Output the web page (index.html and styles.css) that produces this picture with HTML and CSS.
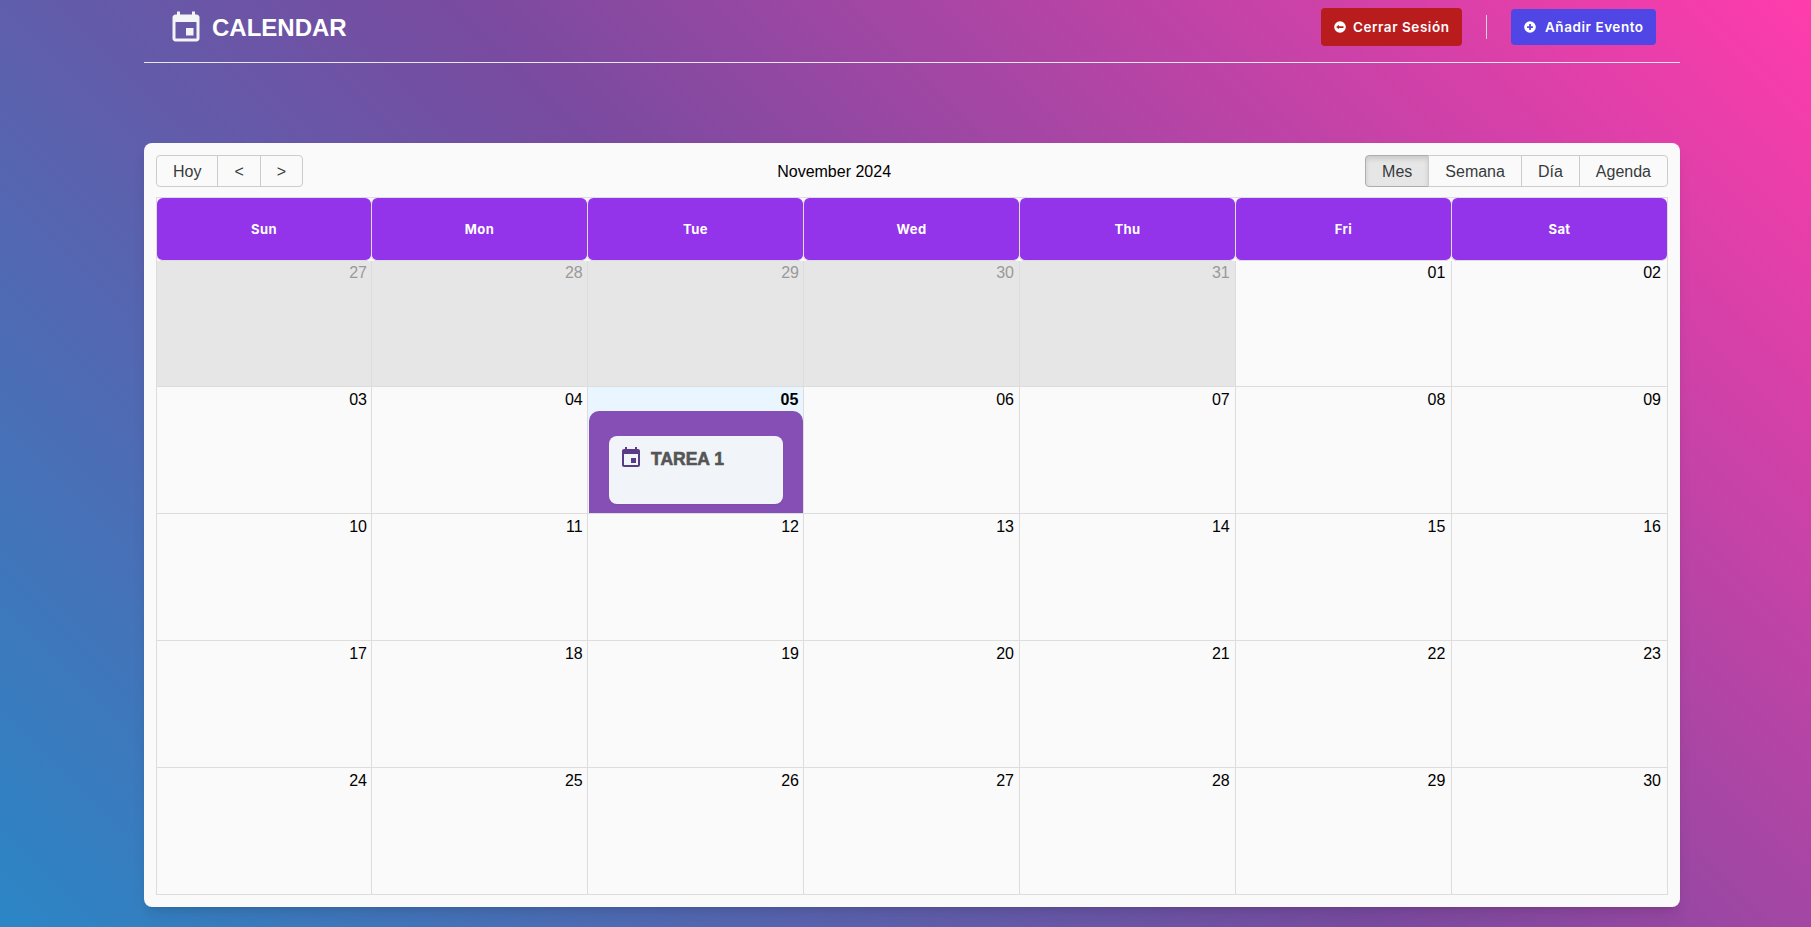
FILE: index.html
```html
<!DOCTYPE html>
<html lang="es">
<head>
<meta charset="utf-8">
<title>Calendar</title>
<link rel="stylesheet" href="styles.css">
</head>
<body>
<div class="page">
  <header class="topbar">
    <div class="brand">
      <svg class="brand-icon" viewBox="0 0 24 24"><path d="M17 12h-5v5h5v-5zM16 1v2H8V1H6v2H5c-1.11 0-1.99.9-1.99 2L3 19c0 1.1.89 2 2 2h14c1.1 0 2-.9 2-2V5c0-1.1-.9-2-2-2h-1V1h-2zm3 18H5V8h14v11z"/></svg>
      <h1 class="brand-title">CALENDAR</h1>
    </div>
    <div class="actions">
      <button class="action action-logout"><svg class="action-icon" viewBox="0 0 24 24"><path fill-rule="evenodd" d="M12 2a10 10 0 1 0 0 20 10 10 0 0 0 0-20zM5.500 12 10 8v2.500h8v3h-8V16z"/></svg>Cerrar Sesión</button>
      <span class="divider"></span>
      <button class="action action-add"><svg class="action-icon" viewBox="0 0 24 24"><path d="M12 2a10 10 0 1 0 0 20 10 10 0 0 0 0-20zm1.500 11.500V17h-3v-3.500H7v-3h3.500V7h3v3.500H17v3h-3.500z"/></svg>Añadir Evento</button>
    </div>
  </header>

  <main class="card">
    <div class="toolbar">
      <div class="btn-group">
        <button class="tb-btn">Hoy</button><button class="tb-btn">&lt;</button><button class="tb-btn">&gt;</button>
      </div>
      <span class="toolbar-label">November 2024</span>
      <div class="btn-group">
        <button class="tb-btn tb-active">Mes</button><button class="tb-btn">Semana</button><button class="tb-btn">Día</button><button class="tb-btn">Agenda</button>
      </div>
    </div>

    <div class="month">
      <div class="week head-row">
        <div class="head">Sun</div><div class="head">Mon</div><div class="head">Tue</div><div class="head">Wed</div><div class="head">Thu</div><div class="head">Fri</div><div class="head">Sat</div>
      </div>
      <div class="week">
        <div class="day off">27</div><div class="day off">28</div><div class="day off">29</div><div class="day off">30</div><div class="day off">31</div><div class="day">01</div><div class="day">02</div>
      </div>
      <div class="week">
        <div class="day">03</div><div class="day">04</div>
        <div class="day today">
          <span class="today-num">05</span>
          <div class="event">
            <div class="event-inner">
              <svg class="event-icon" viewBox="0 0 24 24"><path d="M17 12h-5v5h5v-5zM16 1v2H8V1H6v2H5c-1.11 0-1.99.9-1.99 2L3 19c0 1.1.89 2 2 2h14c1.1 0 2-.9 2-2V5c0-1.1-.9-2-2-2h-1V1h-2zm3 18H5V8h14v11z"/></svg>
              <span class="event-title">TAREA 1</span>
            </div>
          </div>
        </div>
        <div class="day">06</div><div class="day">07</div><div class="day">08</div><div class="day">09</div>
      </div>
      <div class="week">
        <div class="day">10</div><div class="day">11</div><div class="day">12</div><div class="day">13</div><div class="day">14</div><div class="day">15</div><div class="day">16</div>
      </div>
      <div class="week">
        <div class="day">17</div><div class="day">18</div><div class="day">19</div><div class="day">20</div><div class="day">21</div><div class="day">22</div><div class="day">23</div>
      </div>
      <div class="week">
        <div class="day">24</div><div class="day">25</div><div class="day">26</div><div class="day">27</div><div class="day">28</div><div class="day">29</div><div class="day">30</div>
      </div>
    </div>
  </main>
</div>
</body>
</html>
```
FILE: styles.css
```css
* { box-sizing: border-box; }
html, body { margin: 0; height: 100%; }
body {
  background: linear-gradient(225deg, #ff3cac 0%, #784ba0 50%, #2b86c5 100%);
  font-family: "Liberation Sans", Arial, sans-serif;
  overflow: hidden;
}
.page { width: 1536px; margin-left: 144px; }
.topbar {
  display: flex;
  justify-content: space-between;
  align-items: center;
  height: 63px;
  padding: 0 24px 6px;
  border-bottom: 1px solid #e5e7eb;
}
.brand { display: flex; align-items: center; gap: 8px; }
.brand-icon { width: 36px; height: 36px; fill: #f3f4f6; }
.brand-title { margin: 0; font-size: 24px; font-weight: 700; color: #fff; }
.actions { display: flex; align-items: center; gap: 24px; margin-bottom: 2px; }
.action {
  display: flex;
  align-items: center;
  border: 0;
  border-radius: 4px;
  color: #fff;
  font-family: Inter, sans-serif;
  font-size: 13.5px;
  font-weight: 600;
  letter-spacing: .55px;
  white-space: nowrap;
}
.action-icon { width: 14px; height: 14px; fill: #fff; flex: none; }
.action-logout { height: 38px; width: 141px; padding: 0 12px; gap: 6px; background: #b91c1c; }
.action-add { height: 36px; width: 145px; padding: 0 12px; gap: 8px; background: #4f46e5; }
.divider { width: 1px; height: 24px; background: #d1d5db; }

.card {
  margin-top: 80px;
  height: 764px;
  padding: 12px;
  background: #fafafa;
  border-radius: 8px;
  box-shadow: 0 10px 15px -3px rgba(0,0,0,.1), 0 4px 6px -4px rgba(0,0,0,.1);
  display: flex;
  flex-direction: column;
}
.toolbar {
  display: flex;
  align-items: center;
  justify-content: space-between;
  margin-bottom: 10px;
  font-size: 16px;
}
.toolbar-label { color: #000; padding-top: 1px; }
.btn-group { display: flex; }
.tb-btn {
  height: 32px;
  margin-left: -1px;
  padding: 2px 16px 0;
  background: none;
  border: 1px solid #ccc;
  color: #373a3c;
  font: 16px "Liberation Sans", Arial, sans-serif;
}
.tb-btn:first-child { margin-left: 0; border-radius: 4px 0 0 4px; }
.tb-btn:last-child { border-radius: 0 4px 4px 0; }
.tb-active {
  background: #e6e6e6;
  border-color: #adadad;
  box-shadow: inset 0 3px 5px rgba(0,0,0,.125);
}
.month {
  flex: 1;
  display: grid;
  grid-template-rows: 63px 126px repeat(3, 127px) 1fr;
  border: 1px solid #ddd;
}
.week {
  display: grid;
  grid-template-columns: 1fr repeat(6, 216px);
  border-bottom: 1px solid #ddd;
}
.week:last-child { border-bottom: 0; }
.head-row { border-bottom: 0; }
.head {
  display: flex;
  align-items: center;
  justify-content: center;
  background: #9333ea;
  border-left: 1px solid #ddd;
  border-bottom: 1px solid #ddd;
  border-radius: 6px;
  color: #fff;
  font-family: Inter, sans-serif;
  font-size: 13px;
  font-weight: 700;
  letter-spacing: .4px;
}
.head:first-child { border-left: 0; }
.day {
  min-width: 0;
  padding: 3px 4px 0 0;
  border-left: 1px solid #ddd;
  text-align: right;
  color: #000;
  font-size: 16px;
  line-height: 18px;
}
.day:first-child { border-left: 0; }
.day:nth-child(2) { padding-right: 4.3px; }
.day:nth-child(4) { padding-right: 5px; }
.day:nth-child(5) { padding-right: 5.3px; }
.day:nth-child(6) { padding-right: 5.7px; }
.day:nth-child(7) { padding-right: 6px; }
.week:nth-child(n+3) .day:not(.today) { padding-top: 4px; }
.off { background: #e6e6e6; color: #999; }
.today {
  display: flex;
  flex-direction: column;
  padding: 0;
  background: #eaf6ff;
}
.today-num { padding: 4px 4.7px 0 0; height: 24px; font-weight: 700; }
.event {
  flex: 1;
  margin-left: 1px;
  padding: 25px 20px 9px;
  background: #864fb5;
  border-radius: 10px 10px 0 0;
  text-align: left;
}
.event-inner {
  display: flex;
  align-items: flex-start;
  gap: 8px;
  height: 68px;
  padding: 10px;
  background: #f1f5f9;
  border-radius: 8px;
  box-shadow: 0 1px 2px rgba(0,0,0,.05);
}
.event-icon { width: 24px; height: 24px; fill: #5b3a86; flex: none; }
.event-title { color: #555; font-size: 17.5px; line-height: 26px; font-weight: 700; -webkit-text-stroke: .6px #555; }
```
